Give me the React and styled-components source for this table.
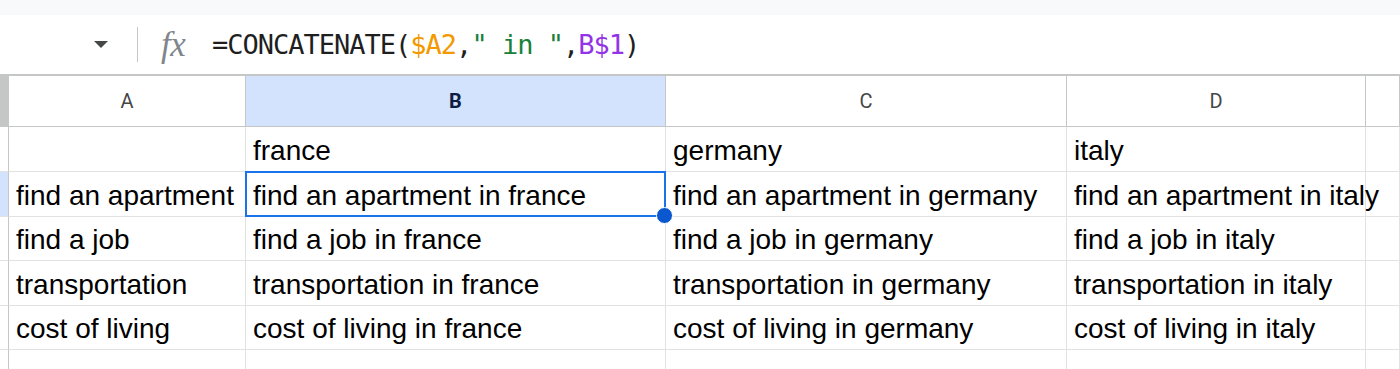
import React from 'react';
import styled, { createGlobalStyle } from 'styled-components';

const GlobalStyle = createGlobalStyle`
    * {
        box-sizing: border-box;
    }

    body {
        margin: 0;
        background: #ffffff;
        font-family: 'Liberation Sans', Arial, sans-serif;
        overflow: hidden;
    }
`;

// E is only partly in view, so its letter is off screen
const columns = [
    { key: 'A', label: 'A', width: 237 },
    { key: 'B', label: 'B', width: 420, active: true },
    { key: 'C', label: 'C', width: 401 },
    { key: 'D', label: 'D', width: 299 },
    { key: 'E', label: '', width: 34 },
];

const rows = [
    { height: 45, cells: ['', 'france', 'germany', 'italy', ''] },
    {
        height: 45,
        selected: true,
        cells: [
            'find an apartment',
            'find an apartment in france',
            'find an apartment in germany',
            'find an apartment in italy',
            '',
        ],
    },
    {
        height: 44,
        cells: ['find a job', 'find a job in france', 'find a job in germany', 'find a job in italy', ''],
    },
    {
        height: 45,
        cells: [
            'transportation',
            'transportation in france',
            'transportation in germany',
            'transportation in italy',
            '',
        ],
    },
    {
        height: 44,
        cells: [
            'cost of living',
            'cost of living in france',
            'cost of living in germany',
            'cost of living in italy',
            '',
        ],
    },
    { height: 45, cells: ['', '', '', '', ''] },
];

const Page = styled.div`
    width: 1400px;
    height: 369px;
    overflow: hidden;
    display: flex;
    flex-direction: column;
`;

const TopBand = styled.div`
    height: 15px;
    background: #f8f9fa;
    flex-shrink: 0;
`;

const FormulaBar = styled.div`
    height: 59px;
    flex-shrink: 0;
    display: flex;
    align-items: center;
    background: #ffffff;
`;

const NameBox = styled.div`
    width: 137px;
    height: 100%;
    display: flex;
    align-items: center;
    justify-content: flex-end;
    padding-right: 29px;
`;

const Caret = styled.div`
    width: 0;
    height: 0;
    border-left: 7px solid transparent;
    border-right: 7px solid transparent;
    border-top: 7px solid #444746;
`;

const Divider = styled.div`
    width: 1px;
    height: 35px;
    background: #c4c7c5;
`;

const FxIcon = styled.span`
    width: 74px;
    padding-left: 23px;
    font-family: 'Liberation Serif', 'Times New Roman', serif;
    font-style: italic;
    font-size: 35px;
    color: #80868b;
    letter-spacing: -0.5px;
`;

const Formula = styled.div`
    font-family: 'DejaVu Sans Mono', 'Liberation Mono', monospace;
    font-size: 27px;
    letter-spacing: -1px;
    color: #1f1f1f;
    white-space: pre;
`;

const Token = styled.span`
    color: ${({ tone }) => tone};
`;

const Sheet = styled.div`
    border-top: 2px solid #c4c7c5;
    display: flex;
    flex-direction: column;
`;

const Row = styled.div`
    display: flex;
    height: ${({ height }) => height}px;
    flex-shrink: 0;
`;

const Stub = styled.div`
    width: 9px;
    flex-shrink: 0;
    border-right: 1px solid #c4c7c5;
    border-bottom: 1px solid ${({ header }) => (header ? '#c4c7c5' : '#e1e3e1')};
    background: ${({ header, selected }) =>
        header ? '#c4c7c5' : selected ? '#d3e3fd' : '#ffffff'};
`;

const HeaderCell = styled.div`
    width: ${({ width }) => width}px;
    flex-shrink: 0;
    display: flex;
    align-items: center;
    justify-content: center;
    border-right: 1px solid #c4c7c5;
    border-bottom: 1px solid #c4c7c5;
    background: ${({ active }) => (active ? '#d3e3fd' : '#ffffff')};
    color: ${({ active }) => (active ? '#0b1d45' : '#444746')};
    font-family: Roboto, 'Liberation Sans', sans-serif;
    font-weight: ${({ active }) => (active ? 700 : 400)};
    font-size: 20px;
`;

const Cell = styled.div`
    position: relative;
    width: ${({ width }) => width}px;
    flex-shrink: 0;
    display: flex;
    align-items: flex-end;
    padding: 0 0 4px 7px;
    border-right: 1px solid #e1e3e1;
    border-bottom: 1px solid #e1e3e1;
    font-size: 28px;
    line-height: 32px;
    color: #000000;
    white-space: nowrap;
    z-index: ${({ active }) => (active ? 2 : 'auto')};
`;

const Selection = styled.div`
    position: absolute;
    top: -1px;
    left: -1px;
    right: -1px;
    bottom: -1px;
    border: 2px solid #1a73e8;
    pointer-events: none;
`;

const Handle = styled.div`
    position: absolute;
    right: -9px;
    bottom: -9px;
    width: 17px;
    height: 17px;
    border-radius: 50%;
    background: #0b57d0;
    border: 1px solid #ffffff;
`;

export default function App() {
    return (
        <Page>
            <GlobalStyle />
            <TopBand />
            <FormulaBar>
                <NameBox>
                    <Caret />
                </NameBox>
                <Divider />
                <FxIcon>fx</FxIcon>
                <Formula>
                    =CONCATENATE(<Token tone="#f29900">$A2</Token>,
                    <Token tone="#188038">" in "</Token>,<Token tone="#9334e6">B$1</Token>)
                </Formula>
            </FormulaBar>
            <Sheet>
                <Row height={51}>
                    <Stub header />
                    {columns.map(col => (
                        <HeaderCell key={col.key} width={col.width} active={col.active}>
                            {col.label}
                        </HeaderCell>
                    ))}
                </Row>
                {rows.map((row, r) => (
                    <Row key={r} height={row.height}>
                        <Stub selected={row.selected} />
                        {row.cells.map((text, c) => {
                            const isActive = row.selected && columns[c].active;
                            return (
                                <Cell key={c} width={columns[c].width} active={isActive}>
                                    {text}
                                    {isActive && (
                                        <Selection>
                                            <Handle />
                                        </Selection>
                                    )}
                                </Cell>
                            );
                        })}
                    </Row>
                ))}
            </Sheet>
        </Page>
    );
}
